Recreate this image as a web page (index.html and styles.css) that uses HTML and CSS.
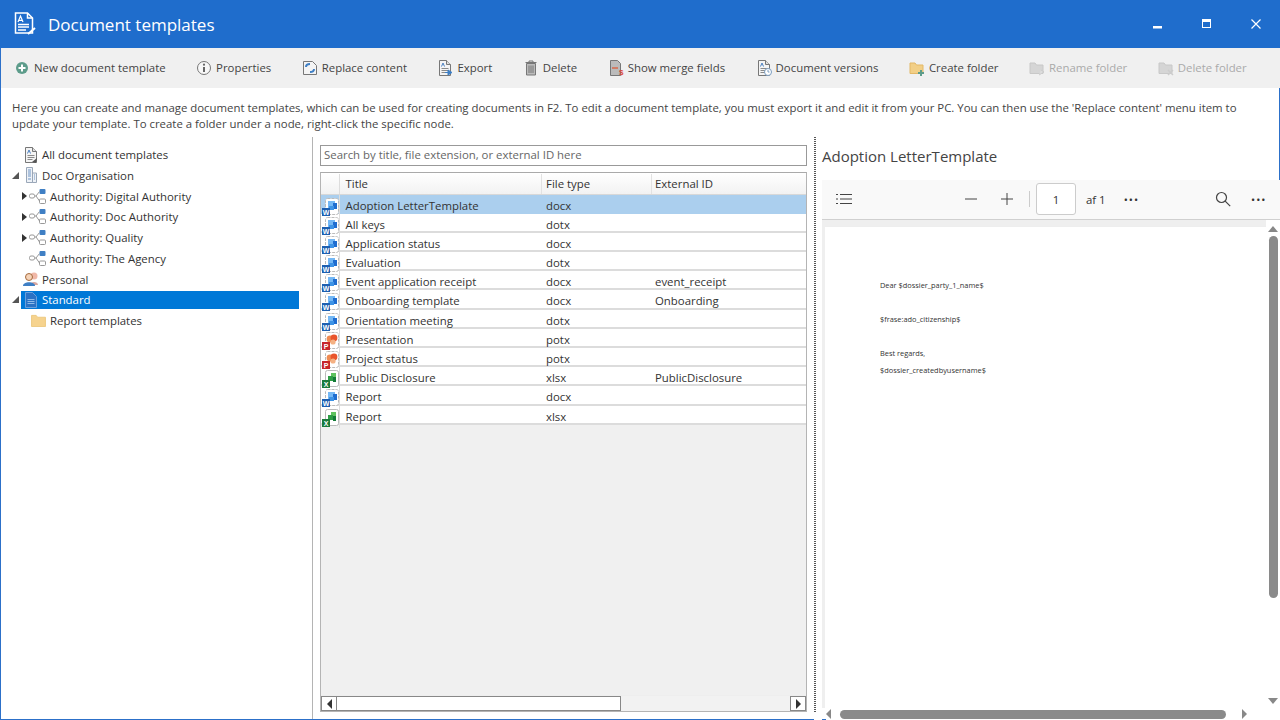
FILE: index.html
```html
<!DOCTYPE html>
<html lang="en">
<head>
<meta charset="utf-8">
<title>Document templates</title>
<link rel="stylesheet" href="styles.css">
</head>
<body>
<svg class="defs" width="0" height="0" aria-hidden="true">
  <defs>
    <symbol id="doc" viewBox="0 0 16 16">
      <path d="M2.500 .5h7l4 4v11h-11z" fill="#f4f4f4" stroke="#777"/>
      <path d="M9.500 .5v4h4" fill="#ddd" stroke="#777"/>
      <path d="M4.500 8.500h7M4.500 10.500h7M4.500 12.500h5" stroke="#8a8a8a"/>
      <path d="M4.500 6.500l1.500-3.500 1.500 3.500" fill="none" stroke="#4a7fc0"/>
    </symbol>
    <symbol id="word" viewBox="0 0 18 18">
      <rect x="4.500" y=".5" width="13" height="16" rx="2" fill="#fff" stroke="#bbb" stroke-dasharray="3 1"/>
      <rect x="7" y="3" width="7" height="7" fill="#74b8f5"/>
      <rect x="12" y="5" width="4" height="6" fill="#1f6dd0"/>
      <rect x="8" y="8" width="5" height="4" fill="#3d93e6"/>
      <rect x="1" y="10" width="8" height="8" fill="#1d5fb0"/>
      <text x="5" y="16.500" class="badge">W</text>
    </symbol>
    <symbol id="ppt" viewBox="0 0 18 18">
      <rect x="4.500" y=".5" width="13" height="16" rx="2" fill="#fff" stroke="#bbb" stroke-dasharray="3 1"/>
      <circle cx="9" cy="7" r="3.400" fill="#ef8a50"/>
      <circle cx="13" cy="6" r="3.400" fill="#e9542c"/>
      <circle cx="12" cy="10" r="2.600" fill="#f4b183"/>
      <rect x="1" y="10" width="8" height="8" fill="#c7262b"/>
      <text x="5" y="16.500" class="badge">P</text>
    </symbol>
    <symbol id="xls" viewBox="0 0 18 18">
      <rect x="4.500" y=".5" width="13" height="16" rx="2" fill="#fff" stroke="#bbb"/>
      <rect x="10" y="3" width="5" height="5" fill="#5fc25f"/>
      <rect x="7" y="6" width="5" height="5" fill="#2e9e46"/>
      <rect x="12" y="7" width="3" height="5" fill="#137a37"/>
      <rect x="1" y="10" width="8" height="8" fill="#1b7a3c"/>
      <text x="5" y="16.500" class="badge">X</text>
    </symbol>
    <symbol id="org" viewBox="0 0 17 15">
      <rect x=".5" y="5" width="5" height="4" rx="1.500" fill="none" stroke="#999"/>
      <rect x="10.500" y="0" width="6" height="5" rx="1" fill="#3f7fc4"/>
      <rect x="10.500" y="10" width="6" height="4.500" rx="1" fill="#fff" stroke="#999"/>
      <path d="M5.500 7H7l3.500-4.500M7 7l3.500 5" fill="none" stroke="#999"/>
    </symbol>
  </defs>
</svg>

<div class="window">
  <header class="titlebar">
    <svg class="title-icon" viewBox="0 0 22 24" fill="none" stroke="#fff" stroke-width="1.500">
      <path d="M1.500 1h12l5 5v15h-17z"/>
      <path d="M13.500 1v5h5"/>
      <path d="M4 10l2.500-6 2.500 6M4.800 8.300h3.400" stroke-width="1.200"/>
      <path d="M4 12.500h11M4 15h11M4 18h8" stroke-width="1.300"/>
      <path d="M14 22l7-6" stroke-width="2"/>
    </svg>
    <h1 class="title">Document templates</h1>
    <div class="win-controls">
      <svg class="win-btn" viewBox="0 0 12 12"><rect x="1" y="8" width="9" height="2.500" fill="#fff"/></svg>
      <svg class="win-btn" viewBox="0 0 12 12"><rect x="1.500" y="1.500" width="8" height="8" fill="none" stroke="#fff"/><rect x="1.500" y="1.500" width="8" height="2.500" fill="#fff"/></svg>
      <svg class="win-btn" viewBox="0 0 12 12"><path d="M1.500 1.500l9 9M10.500 1.500l-9 9" stroke="#fff" stroke-width="1.200"/></svg>
    </div>
  </header>

  <nav class="toolbar">
    <span class="tool"><svg class="ti" viewBox="0 0 16 16"><circle cx="8" cy="8" r="6" fill="#5d9c8b"/><path d="M8 4.500v7M4.500 8h7" stroke="#fff" stroke-width="2"/></svg>New document template</span>
    <span class="tool"><svg class="ti" viewBox="0 0 16 16"><circle cx="8" cy="8" r="6.500" fill="#f8f8f8" stroke="#777"/><path d="M8 7v5" stroke="#666" stroke-width="2"/><circle cx="8" cy="4.700" r="1.100" fill="#666"/></svg>Properties</span>
    <span class="tool"><svg class="ti" viewBox="0 0 16 16"><path d="M1.500 1.500h9l4 4v9h-13z" fill="#f4f4f4" stroke="#777"/><path d="M4 7c0-2 2-3 4-3M12 9c0 2-2 3-4 3" fill="none" stroke="#3f7fc4" stroke-width="2"/></svg>Replace content</span>
    <span class="tool"><svg class="ti" viewBox="0 0 16 16"><use href="#doc"/><path d="M8 12.500h4M11 10l4 2.500-4 2.500z" fill="#3f7fc4" stroke="#3f7fc4"/></svg>Export</span>
    <span class="tool"><svg class="ti" viewBox="0 0 16 16"><path d="M2.500 2.500h11M6 2V1h4v1" stroke="#777" fill="none"/><path d="M3.500 3.500h9V15h-9z" fill="#bbb" stroke="#777"/><path d="M6 5.500V13M8 5.500V13M10 5.500V13" stroke="#777"/></svg>Delete</span>
    <span class="tool"><svg class="ti" viewBox="0 0 16 16"><path d="M2.500 .5h7l3 3v12h-10z" fill="#bbb" stroke="#777"/><path d="M4 8h6" stroke="#d9694a" stroke-width="1.500"/><text x="11" y="15" class="dollar">$</text></svg>Show merge fields</span>
    <span class="tool"><svg class="ti" viewBox="0 0 16 16"><use href="#doc"/><circle cx="12" cy="12" r="3.500" fill="#fff" stroke="#7a9cc0"/><path d="M12 10v2h1.500" stroke="#7a9cc0" fill="none"/></svg>Document versions</span>
    <span class="tool"><svg class="ti" viewBox="0 0 16 16"><path d="M1 3h5l1.500 2H14v8.500H1z" fill="#f2cf86" stroke="#e3b867"/><path d="M9 13h6M12 10v6" stroke="#5d9c8b" stroke-width="2"/></svg>Create folder</span>
    <span class="tool off"><svg class="ti" viewBox="0 0 16 16"><path d="M1 3h5l1.500 2H14v8.500H1z" fill="#d5d5d5" stroke="#c8c8c8"/><path d="M10 15l5-3-3-2" fill="#ddd" stroke="#ccc"/></svg>Rename folder</span>
    <span class="tool off"><svg class="ti" viewBox="0 0 16 16"><path d="M1 3h5l1.500 2H14v8.500H1z" fill="#d5d5d5" stroke="#c8c8c8"/><path d="M10 10l5 5M15 10l-5 5" stroke="#ccc" stroke-width="1.500"/></svg>Delete folder</span>
  </nav>

  <p class="intro">Here you can create and manage document templates, which can be used for creating documents in F2. To edit a document template, you must export it and edit it from your PC. You can then use the 'Replace content' menu item to<br>update your template. To create a folder under a node, right-click the specific node.</p>

  <main class="panes">
    <aside class="tree">
      <div class="node l0"><span class="tw"></span><svg class="ni" viewBox="0 0 16 16"><use href="#doc"/><path d="M9 15l5-4-1 5z" fill="#555"/></svg>All document templates</div>
      <div class="node l0"><span class="tw open"></span><svg class="ni" viewBox="0 0 16 16"><path d="M3.500 .5h6v15h-6zM9.500 6h4v9.500h-4z" fill="#eef2f7" stroke="#9aa7b8"/><path d="M5 3h3M5 5h3M5 7h3M5 9h3M5 12h3M11 8h1M11 10h1M11 12h1" stroke="#6d93c4"/></svg>Doc Organisation</div>
      <div class="node l1"><span class="tw closed"></span><svg class="oi"><use href="#org"/></svg>Authority: Digital Authority</div>
      <div class="node l1"><span class="tw closed"></span><svg class="oi"><use href="#org"/></svg>Authority: Doc Authority</div>
      <div class="node l1"><span class="tw closed"></span><svg class="oi"><use href="#org"/></svg>Authority: Quality</div>
      <div class="node l1"><span class="tw"></span><svg class="oi"><use href="#org"/></svg>Authority: The Agency</div>
      <div class="node l0"><span class="tw"></span><svg class="ni" viewBox="0 0 16 16"><circle cx="11" cy="5" r="3.500" fill="#f0b8a8"/><path d="M7 14c0-4 8-4 8 0z" fill="#d9a8a0"/><circle cx="6" cy="6" r="3.500" fill="#f5d3b8" stroke="#a56a3d"/><path d="M0 15c0-5 12-5 12 0z" fill="#3f7fc4"/></svg>Personal</div>
      <div class="node l0"><span class="tw open"></span><span class="sel"><svg class="ni" viewBox="0 0 16 16"><path d="M2.500 .5h7l4 4v11h-11z" fill="#2b72c4" stroke="#6aa0dc"/><path d="M4.500 7.500h7M4.500 9.500h7M4.500 11.500h7" stroke="#8fbbe8"/></svg>Standard</span></div>
      <div class="node l1"><span class="tw"></span><svg class="fi" viewBox="0 0 16 14"><path d="M.5 1.500h5l1.500 2h8.500v10H.5z" fill="#f6d38e" stroke="#ecc87e"/></svg>Report templates</div>
    </aside>

    <div class="split-line"></div>

    <section class="list">
      <div class="search">Search by title, file extension, or external ID here</div>
      <div class="grid">
        <div class="row head"><span class="c0"></span><span class="c1">Title</span><span class="c2">File type</span><span class="c3">External ID</span></div>
        <div class="row on"><span class="c0"><svg class="fti"><use href="#word"/></svg></span><span class="c1">Adoption LetterTemplate</span><span class="c2">docx</span><span class="c3"></span></div>
        <div class="row"><span class="c0"><svg class="fti"><use href="#word"/></svg></span><span class="c1">All keys</span><span class="c2">dotx</span><span class="c3"></span></div>
        <div class="row"><span class="c0"><svg class="fti"><use href="#word"/></svg></span><span class="c1">Application status</span><span class="c2">docx</span><span class="c3"></span></div>
        <div class="row"><span class="c0"><svg class="fti"><use href="#word"/></svg></span><span class="c1">Evaluation</span><span class="c2">dotx</span><span class="c3"></span></div>
        <div class="row"><span class="c0"><svg class="fti"><use href="#word"/></svg></span><span class="c1">Event application receipt</span><span class="c2">docx</span><span class="c3">event_receipt</span></div>
        <div class="row"><span class="c0"><svg class="fti"><use href="#word"/></svg></span><span class="c1">Onboarding template</span><span class="c2">docx</span><span class="c3">Onboarding</span></div>
        <div class="row"><span class="c0"><svg class="fti"><use href="#word"/></svg></span><span class="c1">Orientation meeting</span><span class="c2">dotx</span><span class="c3"></span></div>
        <div class="row"><span class="c0"><svg class="fti"><use href="#ppt"/></svg></span><span class="c1">Presentation</span><span class="c2">potx</span><span class="c3"></span></div>
        <div class="row"><span class="c0"><svg class="fti"><use href="#ppt"/></svg></span><span class="c1">Project status</span><span class="c2">potx</span><span class="c3"></span></div>
        <div class="row"><span class="c0"><svg class="fti"><use href="#xls"/></svg></span><span class="c1">Public Disclosure</span><span class="c2">xlsx</span><span class="c3">PublicDisclosure</span></div>
        <div class="row"><span class="c0"><svg class="fti"><use href="#word"/></svg></span><span class="c1">Report</span><span class="c2">docx</span><span class="c3"></span></div>
        <div class="row"><span class="c0"><svg class="fti"><use href="#xls"/></svg></span><span class="c1">Report</span><span class="c2">xlsx</span><span class="c3"></span></div>
        <div class="grid-fill"></div>
        <div class="hscroll">
          <span class="hs-btn"><i class="arr left"></i></span>
          <span class="hs-thumb"></span>
          <span class="hs-track"></span>
          <span class="hs-btn"><i class="arr right"></i></span>
        </div>
      </div>
    </section>

    <div class="split-dots"></div>

    <section class="preview">
      <h2 class="doc-title">Adoption LetterTemplate</h2>
      <div class="pdf-bar">
        <svg class="pdf-ico list-ico" viewBox="0 0 18 14" fill="none" stroke="#444"><path d="M5 2.500h12M5 7h12M5 11.500h12M1 2.500h2M1 7h2M1 11.500h2"/></svg>
        <svg class="pdf-ico minus" viewBox="0 0 14 14"><path d="M1 7h12" stroke="#444"/></svg>
        <svg class="pdf-ico plus" viewBox="0 0 14 14"><path d="M1 7h12M7 1v12" stroke="#444"/></svg>
        <span class="pdf-sep"></span>
        <span class="pdf-page">1</span>
        <span class="pdf-of">af 1</span>
        <span class="pdf-more">•••</span>
        <svg class="pdf-ico search-ico" viewBox="0 0 16 16" fill="none" stroke="#444" stroke-width="1.200"><circle cx="6.500" cy="6.500" r="5"/><path d="M10.200 10.200l5 5"/></svg>
        <span class="pdf-more last">•••</span>
      </div>
      <div class="pdf-body">
        <div class="pdf-view">
          <div class="page">
            <p class="pl p1">Dear $dossier_party_1_name$</p>
            <p class="pl p2">$frase:ado_citizenship$</p>
            <p class="pl p3">Best regards,</p>
            <p class="pl p4">$dossier_createdbyusername$</p>
          </div>
          <div class="vscroll"><i class="tri up"></i><span class="v-thumb"></span><i class="tri down"></i></div>
        </div>
        <div class="pdf-hs">
          <span class="corner"></span>
          <i class="tri lf"></i>
          <span class="h-thumb"></span>
          <i class="tri rt"></i>
        </div>
      </div>
    </section>
  </main>
</div>
</body>
</html>
```

FILE: styles.css
```css
* { box-sizing: border-box; }
html, body { margin: 0; padding: 0; }
body {
  width: 1280px; height: 720px; overflow: hidden; background: #fff;
  font-family: "Open Sans", "Noto Sans", sans-serif;
  font-size: 11.400px; color: #444;
}
.defs { display: block; height: 0; }
.badge { font: bold 7px "Liberation Sans", sans-serif; fill: #fff; text-anchor: middle; }
.dollar { font: bold 8px "Liberation Sans", sans-serif; fill: #d9483a; }

.window { display: flex; flex-direction: column; height: 720px; }
.titlebar { height: 48px; flex: none; display: flex; align-items: center; background: #1f6dcc; color: #fff; padding-left: 14px; }
.title-icon { width: 22px; height: 24px; margin-right: 12px; }
.title { margin: 0; font-size: 17px; font-weight: 400; }
.win-controls { margin-left: auto; display: flex; gap: 37px; padding-right: 18px; }
.win-btn { width: 12px; height: 12px; display: block; }

.toolbar { height: 40px; flex: none; display: flex; align-items: center; gap: 30.500px; padding: 0 0 1px 13px; background: #f0f0f0; border-left: 1px solid #2c70c9; white-space: nowrap; }
.tool { display: flex; align-items: center; gap: 4px; }
.tool.off { color: #aaa; }
.ti { width: 16px; height: 16px; flex: none; }

.intro { margin: 0; flex: none; height: 49px; padding: 12px 0 0 11px; line-height: 16px; border-left: 1px solid #2c70c9; border-right: 1px solid #2c70c9; white-space: nowrap; }

.panes { flex: 1; min-height: 0; display: grid; grid-template-columns: 312px 1px 501px 1px 1fr; }

.tree { padding: 7.200px 13px 0 0; border-left: 1px solid #2c70c9; border-bottom: 1px solid #2c70c9; }
.node { height: 20.750px; display: flex; align-items: center; white-space: nowrap; color: #333; }
.l0 { padding-left: 11px; }
.l1 { padding-left: 21px; }
.tw { flex: none; height: 8px; }
.l0 .tw { width: 9px; }
.l1 .tw { width: 7px; }
.tw.open { border-style: solid; border-width: 0 0 7px 7px; border-color: transparent transparent #555 transparent; width: 0; height: 0; margin-right: 2px; }
.tw.closed { border-style: solid; border-width: 4px 0 4px 5px; border-color: transparent transparent transparent #333; width: 0; height: 0; margin-right: 2px; }
.ni { width: 16px; height: 16px; flex: none; margin: 0 3px 0 2px; }
.oi { width: 17px; height: 15px; flex: none; margin-right: 4px; }
.fi { width: 15px; height: 13px; flex: none; margin: 0 4px 0 2px; }
.sel { flex: 1; display: flex; align-items: center; height: 18px; background: #0078d7; color: #fff; }

.split-line { background: #b4b4b4; border-bottom: 1px solid #2c70c9; }

.list { padding: 0 7px; border-bottom: 1px solid #2c70c9; display: flex; flex-direction: column; }
.search { height: 21px; flex: none; margin-top: 8px; border: 1px solid #999; padding-left: 3px; line-height: 18px; color: #666; background: #fff; }
.grid { flex: 1; margin: 6px 0 7px; border: 1px solid #b4b4b4; border-top-color: #aaa; display: flex; flex-direction: column; background: #f0f0f0; }
.row { height: 19.200px; flex: none; display: grid; grid-template-columns: 18px 202px 110px 1fr; align-items: center; background: #fff; border-bottom: 2px solid #dcdcdc; color: #333; white-space: nowrap; }
.row.on { background: #abcfee; border-bottom-color: #abcfee; }
.row.head { height: 21.500px; padding-top: 1px; background: linear-gradient(#fff, #f2f2f2); border-bottom: 1px solid #d8d8d8; }
.row > span { height: 100%; display: flex; align-items: center; padding-bottom: 1px; }
.row > .c1 { padding-left: 5.500px; border-left: 1px solid #ddd; }
.row > .c2 { padding-left: 5px; }
.row > .c3 { padding-left: 4px; }
.head > .c2, .head > .c3 { border-left: 1px solid #e2e2e2; }
.row.head > .c2 { padding-left: 4px; }
.row.head > .c3 { padding-left: 3px; }
.fti { width: 18px; height: 18px; flex: none; margin-top: 3px; position: relative; z-index: 1; }
.grid-fill { flex: 1; }
.hscroll { height: 16px; flex: none; display: flex; background: #f2f2f2; border-top: 1px solid #eee; }
.hs-btn { width: 16px; flex: none; background: #fff; border: 1px solid #888; display: flex; align-items: center; justify-content: center; }
.hs-thumb { width: 284px; flex: none; background: #fff; border: 1px solid #888; border-left: 0; }
.hs-track { flex: 1; }
.arr { width: 0; height: 0; border-style: solid; border-color: transparent; }
.arr.left { border-width: 5px 5px 5px 0; border-right-color: #333; }
.arr.right { border-width: 5px 0 5px 5px; border-left-color: #333; }

.split-dots { width: 2px; border-left: 1px dotted #555; border-right: 1px dotted #555; margin-bottom: 8px; }

.preview { display: flex; flex-direction: column; padding-left: 7px; min-width: 0; }
.doc-title { margin: 0 0 0 -7px; height: 43px; flex: none; padding: 9px 0 0 7px; font-size: 15px; font-weight: 400; line-height: 20px; color: #444; white-space: nowrap; border-right: 1px solid #2c70c9; }
.pdf-bar { height: 40px; flex: none; display: flex; align-items: center; padding-bottom: 1px; background: #f9f9f9; border-bottom: 1px solid #d0d0d0; color: #333; }
.pdf-ico { flex: none; display: block; }
.list-ico { width: 18px; height: 14px; margin-left: 13px; }
.minus { width: 14px; height: 14px; margin-left: 111px; }
.plus { width: 14px; height: 14px; margin-left: 22px; }
.pdf-sep { width: 1px; height: 16px; background: #ccc; margin-left: 15px; }
.pdf-page { width: 40px; height: 32px; margin-left: 6px; border: 1px solid #ccc; border-radius: 3px; background: #fff; display: flex; align-items: center; justify-content: center; }
.pdf-of { margin-left: 10px; }
.pdf-more { margin-left: 18px; font-size: 11px; letter-spacing: 1px; }
.search-ico { width: 16px; height: 16px; margin-left: 76px; }
.pdf-more.last { margin-left: 20px; }
.pdf-body { flex: 1; min-height: 0; display: flex; flex-direction: column; background: #fff; }
.pdf-view { flex: 1; min-height: 0; display: flex; background: #efefef; padding-top: 6px; }
.page { flex: 1; background: #fff; margin-left: 3px; padding-left: 55px; border-top: 1px solid #eee; }
.pl { margin: 0; font-family: "Open Sans", "Noto Sans", sans-serif; font-size: 7.400px; line-height: 10px; color: #333; white-space: nowrap; }
.p1 { margin-top: 53px; }
.p2 { margin-top: 24px; }
.p3 { margin-top: 24px; }
.p4 { margin-top: 7px; }
.vscroll { width: 14px; flex: none; background: #fff; display: flex; flex-direction: column; align-items: center; padding-top: 6px; margin-top: -6px; }
.v-thumb { width: 9px; height: 362px; margin-top: 4px; border-radius: 5px; background: #8a8a8a; }
.tri { width: 0; height: 0; border-style: solid; border-color: transparent; display: block; flex: none; }
.tri.up { border-width: 0 5px 6px 5px; border-bottom-color: #888; }
.tri.down { border-width: 6px 5px 0 5px; border-top-color: #888; margin-top: auto; margin-bottom: 4px; }
.pdf-hs { height: 12px; flex: none; display: flex; align-items: center; background: #fff; }
.corner { width: 4px; height: 12px; flex: none; border-bottom: 1px solid #2c70c9; }
.tri.lf { border-width: 5px 5px 5px 0; border-right-color: #888; }
.h-thumb { width: 386px; height: 9px; border-radius: 5px; background: #8a8a8a; margin-left: 9px; }
.tri.rt { border-width: 5px 0 5px 5px; border-left-color: #888; margin-left: 16px; }
```
